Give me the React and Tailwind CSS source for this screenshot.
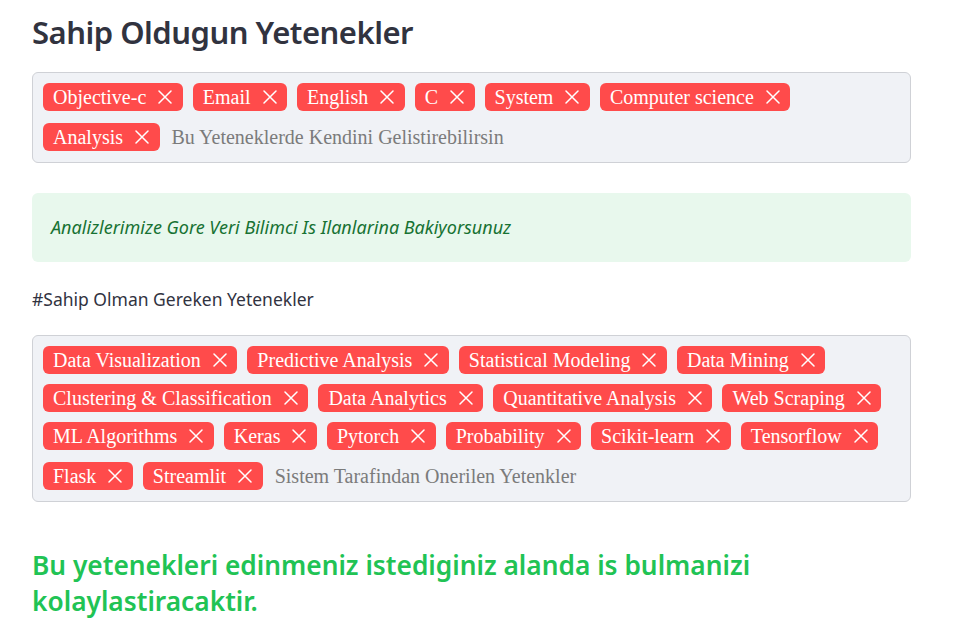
import React from 'react';

const owned = ['Objective-c', 'Email', 'English', 'C', 'System', 'Computer science', 'Analysis'];

const needed = [
  'Data Visualization', 'Predictive Analysis', 'Statistical Modeling', 'Data Mining',
  'Clustering & Classification', 'Data Analytics', 'Quantitative Analysis', 'Web Scraping',
  'ML Algorithms', 'Keras', 'Pytorch', 'Probability', 'Scikit-learn', 'Tensorflow',
  'Flask', 'Streamlit',
];

const Tag = ({ label }) => (
  <span className="flex items-center h-[28px] rounded-[6px] bg-[#ff4b4b] pl-[10px] pr-[10.5px] text-white text-[20px] leading-none [font-family:'Liberation_Serif',serif]">
    <span>{label}</span>
    <svg className="ml-[12px] w-[14px] h-[14px]" viewBox="0 0 14 14" fill="none" stroke="currentColor" strokeWidth="1.5" strokeLinecap="round">
      <path d="M1 1l12 12M13 1L1 13" />
    </svg>
  </span>
);

const TagBox = ({ tags, placeholder }) => (
  <div className="flex flex-wrap items-center gap-x-[10px] gap-y-[10px] rounded-[6px] border border-[#cfd1d6] bg-[#f0f2f6] px-[10px] pt-[10px] pb-[9px]">
    {tags.map((t) => <Tag key={t} label={t} />)}
    <span className="flex items-center h-[32px] ml-[2px] text-[20px] text-[#7b7b7b] [font-family:'Liberation_Serif',serif]">{placeholder}</span>
  </div>
);

export default function App() {
  return (
    <div className="min-h-screen bg-white [font-family:'Noto_Sans',sans-serif] text-[#31333f]">
      <div className="w-[879px] ml-[32px] pt-[12px]">
        <h2 className="text-[31px] font-semibold leading-[40px] tracking-[-0.5px] text-[#31333f]">Sahip Oldugun Yetenekler</h2>
        <div className="mt-[20px]">
          <TagBox tags={owned} placeholder="Bu Yeteneklerde Kendini Gelistirebilirsin" />
        </div>
        <div className="mt-[30px] rounded-[6px] bg-[#e8f8ed] px-[19px] py-[22px] text-[18px] leading-[25px] italic text-[#177233]">
          Analizlerimize Gore Veri Bilimci Is Ilanlarina Bakiyorsunuz
        </div>
        <p className="mt-[25px] text-[17.5px] leading-[24px]">#Sahip Olman Gereken Yetenekler</p>
        <div className="mt-[24px]">
          <TagBox tags={needed} placeholder="Sistem Tarafindan Onerilen Yetenkler" />
        </div>
        <p className="mt-[45px] text-[26.3px] font-semibold leading-[36px] text-[#21c354]">
          Bu yetenekleri edinmeniz istediginiz alanda is bulmanizi kolaylastiracaktir.
        </p>
      </div>
    </div>
  );
}
